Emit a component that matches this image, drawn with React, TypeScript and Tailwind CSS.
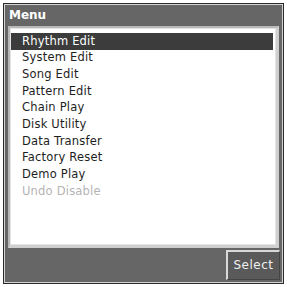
import React from "react";

const items = [
  "Rhythm Edit",
  "System Edit",
  "Song Edit",
  "Pattern Edit",
  "Chain Play",
  "Disk Utility",
  "Data Transfer",
  "Factory Reset",
  "Demo Play",
];

export default function App() {
  return (
    <div
      className="w-[287px] h-[287px] bg-white p-[3px]"
      style={{ fontFamily: '"DejaVu Sans", "Liberation Sans", sans-serif' }}
    >
      <div className="w-full h-full border border-[#2a2a2a] bg-[#d4d4d4] p-px">
        <div className="w-full h-full bg-[#666666] flex flex-col">
          <div className="h-[19px] flex items-center px-[4px] text-white font-bold text-[12px] leading-none">
            Menu
          </div>
          <div className="mx-[3px] mt-[2px] flex-1 border-t-2 border-l-2 border-[#b8b8b8] border-r-[3px] border-r-[#cfcfcf] border-b-[3px] border-b-[#cfcfcf] bg-white flex flex-col">
            <div className="border border-[#e4e4e4] flex-1 pt-[4px] pr-[2px]">
              {items.map((t, i) => (
                <div
                  key={t}
                  className={
                    "h-[16.7px] flex items-center pl-[11px] text-[11.5px] tracking-[0.2px] leading-none " +
                    (i === 0 ? "bg-[#3c3c3c] text-white" : "text-[#1e1e1e]")
                  }
                >
                  {t}
                </div>
              ))}
              <div className="h-[16.7px] flex items-center pl-[11px] text-[11.5px] tracking-[0.2px] leading-none text-[#b4b4b4]">
                Undo Disable
              </div>
            </div>
          </div>
          <div className="h-[34px] flex items-center justify-end pr-[2px] pb-[1px]">
            <div className="h-[30px] w-[54px] border-t-2 border-l-2 border-[#d8d8d8] border-r border-b border-r-[#444] border-b-[#444] bg-[#5a5a5a] flex items-center justify-center text-[#f0f0f0] text-[12px] tracking-[0.5px] leading-none">
              Select
            </div>
          </div>
        </div>
      </div>
    </div>
  );
}
